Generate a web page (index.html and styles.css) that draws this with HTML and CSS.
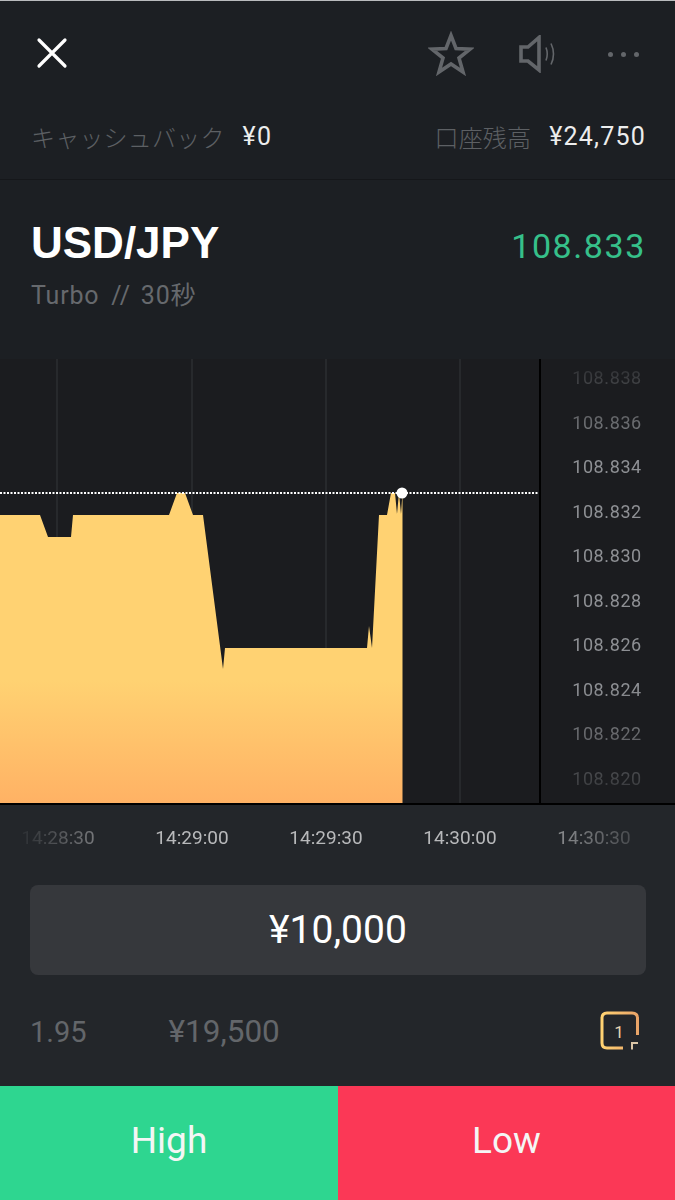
FILE: index.html
```html
<!DOCTYPE html>
<html lang="ja">

<head>
  <meta charset="utf-8">
  <title>USD/JPY Turbo</title>
  <link rel="stylesheet" href="styles.css">
</head>

<body>
  <div class="top">
    <div class="toolbar">
      <svg class="icon-close" width="32" height="32" viewBox="0 0 32 32">
        <path d="M3 3 L29 29 M29 3 L3 29" />
      </svg>
      <div class="tools">
        <svg class="icon-star" width="46" height="46" viewBox="0 0 46 46">
          <path d="M23 4.5 L28 17.5 L42 18.2 L31 27 L35 41 L23 33 L11 41 L15 27 L4 18.2 L18 17.5 Z" />
        </svg>
        <svg class="icon-sound" width="38" height="38" viewBox="0 0 38 38">
          <path class="cone" d="M2 12 L9 12 L20 2.5 L20 35 L9 26 L2 26 Z" />
          <path class="wave" d="M27 12.5 Q29.5 19 27 25.5 M32 8.5 Q37 19 32 29.5" />
        </svg>
        <div class="dots"><i></i><i></i><i></i></div>
      </div>
    </div>
    <div class="stats">
      <div class="stat"><span class="stat-label">キャッシュバック</span><span class="stat-value">¥0</span></div>
      <div class="stat"><span class="stat-label">口座残高</span><span class="stat-value">¥24,750</span></div>
    </div>
  </div>

  <div class="pair">
    <div>
      <h1 class="pair-name">USD/JPY</h1>
      <div class="pair-sub">Turbo<span class="sep">//</span>30秒</div>
    </div>
    <div class="rate">108.833</div>
  </div>

  <div class="chart">
    <svg class="plot" width="539" height="444" viewBox="0 0 539 444">
      <defs>
        <linearGradient id="area" x1="0" y1="0" x2="0" y2="1">
          <stop offset="0" stop-color="#ffd272" />
          <stop offset="0.6" stop-color="#ffd272" />
          <stop offset="1" stop-color="#ffb164" />
        </linearGradient>
      </defs>
      <path class="grid" d="M57 0 V444 M192 0 V444 M326 0 V444 M460 0 V444" />
      <path fill="url(#area)" d="M-2 156 L40 156 L48 178 L71 178 L73 156 L169 156 L177 134 L185 134 L193 156 L203 156 L223 310 L225 289 L367 289 L369 267 L372 289 L379 156 L387 156 L391 134 L395 134 L397 155 L399 134 L401 155 L402.5 134 L402.5 446 L-2 446 Z" />
      <path class="price-line" d="M0 134 H539" />
      <circle class="price-dot" cx="402" cy="134" r="5.5" />
    </svg>
    <div class="y-axis">
      <div class="y-labels">
        <span>108.838</span>
        <span>108.836</span>
        <span>108.834</span>
        <span>108.832</span>
        <span>108.830</span>
        <span>108.828</span>
        <span>108.826</span>
        <span>108.824</span>
        <span>108.822</span>
        <span>108.820</span>
      </div>
    </div>
  </div>

  <div class="x-axis">
    <span>14:28:30</span>
    <span>14:29:00</span>
    <span>14:29:30</span>
    <span>14:30:00</span>
    <span>14:30:30</span>
  </div>

  <div class="amount">¥10,000</div>

  <div class="payout">
    <span class="payout-rate">1.95</span>
    <span class="payout-value">¥19,500</span>
    <svg class="icon-one-click" width="40" height="39" viewBox="0 0 40 39">
      <defs>
        <linearGradient id="gold" x1="0" y1="0" x2="1" y2="0">
          <stop offset="0" stop-color="#ffd272" />
          <stop offset="1" stop-color="#e9a468" />
        </linearGradient>
      </defs>
      <path class="frame" stroke="url(#gold)" d="M23 37 L7 37 Q2 37 2 32 L2 7 Q2 2 7 2 L32 2 Q37.5 2 37.5 7 L37.5 24" />
      <path class="corner" d="M32 38.5 L32 32 H38" />
      <text class="one" x="19" y="27">1</text>
    </svg>
  </div>

  <div class="actions">
    <button class="btn btn-high">High</button>
    <button class="btn btn-low">Low</button>
  </div>
</body>

</html>
```

FILE: styles.css
```css
html {
  background: #23262a;
}

body {
  margin: 0;
  width: 675px;
  height: 1200px;
  overflow: hidden;
  display: flex;
  flex-direction: column;
  color: #fff;
  background-color: #23262a;
  border-top: 1px solid #b9bbbd;
  box-sizing: border-box;
  font-family: Roboto, "Noto Sans CJK JP", sans-serif;
}

.top {
  height: 179px;
  flex: none;
  box-sizing: border-box;
  background-color: #1c1f23;
  border-bottom: 1px solid #15171a;
}

.toolbar {
  height: 87px;
  padding: 21px 36px 0 36px;
  box-sizing: border-box;
  display: flex;
  justify-content: space-between;
  align-items: flex-start;
}

.icon-close {
  margin-top: 15px;
}

.icon-close path {
  fill: none;
  stroke: #fff;
  stroke-width: 3.2;
  stroke-linecap: round;
}

.tools {
  display: flex;
  align-items: center;
  height: 64px;
}

.icon-star path {
  fill: none;
  stroke: #63666a;
  stroke-width: 3.6;
  stroke-linejoin: miter;
}

.icon-sound {
  margin-left: 45px;
}

.icon-sound .cone {
  fill: none;
  stroke: #63666a;
  stroke-width: 3.6;
}

.icon-sound .wave {
  fill: none;
  stroke: #63666a;
  stroke-width: 1.6;
}

.dots {
  display: flex;
  gap: 8px;
  margin-left: 51px;
}

.dots i {
  display: block;
  width: 5px;
  height: 5px;
  border-radius: 50%;
  background-color: #63666a;
}

.stats {
  display: flex;
  justify-content: space-between;
  padding: 30px 29px 0 31px;
}

.stat {
  display: flex;
  align-items: center;
  gap: 18px;
  height: 36px;
}

.stat-label {
  color: #5d6064;
  font-size: 24px;
  font-weight: 300;
  letter-spacing: 0.2px;
}

.stat-value {
  color: #eceded;
  font-size: 25px;
  letter-spacing: 1.2px;
}

.pair {
  height: 179px;
  flex: none;
  padding: 37px 29px 0 31px;
  box-sizing: border-box;
  display: flex;
  justify-content: space-between;
  align-items: flex-start;
  background-color: #1c1f23;
}

.pair-name {
  margin: 0;
  font-family: "Liberation Sans", sans-serif;
  font-size: 44px;
  line-height: 52px;
  font-weight: 700;
}

.pair-sub {
  margin-top: 11px;
  color: #66696d;
  font-size: 25px;
  line-height: 32px;
  letter-spacing: 0.8px;
}

.sep {
  margin: 0 10px 0 12px;
}

.rate {
  margin-top: 5px;
  color: #36c08a;
  font-size: 34px;
  line-height: 48px;
  letter-spacing: 1.6px;
}

.chart {
  height: 446px;
  flex: none;
  box-sizing: border-box;
  display: flex;
  background-color: #1b1c1f;
  border-bottom: 2px solid #000;
}

.plot {
  display: block;
  flex: none;
}

.grid {
  fill: none;
  stroke: #2c2e32;
  stroke-width: 1.5;
}

.price-line {
  fill: none;
  stroke: #fff;
  stroke-width: 2;
  stroke-dasharray: 2 1.5;
}

.price-dot {
  fill: #fff;
}

.y-axis {
  flex: 1;
  overflow: hidden;
  border-left: 2px solid #000;
}

.y-labels {
  display: flex;
  flex-direction: column;
  align-items: center;
  margin-top: -3px;
  padding-right: 2px;
  -webkit-mask-image: linear-gradient(#0000 -2%, #000 23%, #000 74%, #0000 106%);
  mask-image: linear-gradient(#0000 -2%, #000 23%, #000 74%, #0000 106%);
}

.y-labels span {
  height: 44.5px;
  line-height: 44.5px;
  color: #8e9094;
  font-size: 18px;
  letter-spacing: 0.6px;
}

.x-axis {
  height: 80px;
  flex: none;
  margin-left: -9px;
  padding-bottom: 16px;
  box-sizing: border-box;
  display: flex;
  align-items: center;
  -webkit-mask-image: linear-gradient(90deg, #0000 3%, #000 25%, #000 75%, #0000 100%);
  mask-image: linear-gradient(90deg, #0000 3%, #000 25%, #000 75%, #0000 100%);
}

.x-axis span {
  flex: none;
  width: 134px;
  text-align: center;
  color: #b8b9bb;
  font-size: 19px;
}

.amount {
  height: 90px;
  flex: none;
  margin: 0 29px 0 30px;
  line-height: 90px;
  text-align: center;
  border-radius: 8px;
  background-color: #36383c;
  color: #fff;
  font-size: 39px;
}

.payout {
  height: 111px;
  flex: none;
  padding: 2px 35px 0 30px;
  box-sizing: border-box;
  display: flex;
  align-items: center;
  color: #63666a;
  font-size: 29px;
}

.payout-value {
  margin-left: 82px;
  font-size: 31.5px;
}

.icon-one-click {
  margin-left: auto;
  margin-top: -2px;
}

.frame {
  fill: none;
  stroke-width: 3;
}

.corner {
  fill: none;
  stroke: #d9c4a6;
  stroke-width: 2;
}

.one {
  fill: #e8d3b0;
  font-size: 17px;
  text-anchor: middle;
}

.actions {
  display: flex;
  flex: 1;
}

.btn {
  flex: none;
  height: 100%;
  border: none;
  padding: 0 0 5px;
  color: #f4f6f5;
  font-family: Roboto, sans-serif;
  font-size: 37px;
}

.btn-high {
  width: 338px;
  background-color: #2ed690;
}

.btn-low {
  width: 337px;
  background-color: #fb3856;
}
```
